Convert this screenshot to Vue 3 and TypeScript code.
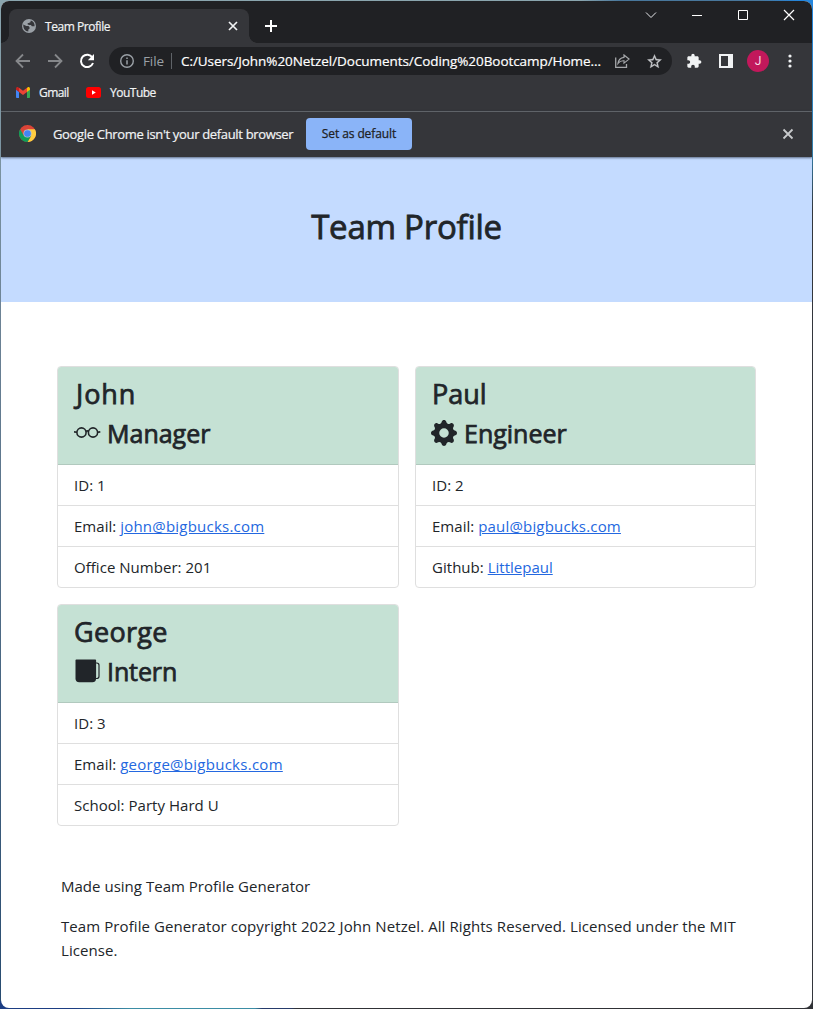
<script setup lang="ts">
interface Row { label: string; value: string; link?: boolean }
interface Member { name: string; role: string; icon: 'glasses' | 'gear' | 'mug'; rows: Row[] }

const team: Member[] = [
  { name: 'John', role: 'Manager', icon: 'glasses', rows: [
    { label: 'ID:', value: '1' },
    { label: 'Email:', value: 'john@bigbucks.com', link: true },
    { label: 'Office Number:', value: '201' },
  ] },
  { name: 'Paul', role: 'Engineer', icon: 'gear', rows: [
    { label: 'ID:', value: '2' },
    { label: 'Email:', value: 'paul@bigbucks.com', link: true },
    { label: 'Github:', value: 'Littlepaul', link: true },
  ] },
  { name: 'George', role: 'Intern', icon: 'mug', rows: [
    { label: 'ID:', value: '3' },
    { label: 'Email:', value: 'george@bigbucks.com', link: true },
    { label: 'School:', value: 'Party Hard U' },
  ] },
]
</script>

<template>
  <div class="desktop">
    <div class="window">
      <div class="titlebar">
        <div class="tab">
          <svg class="globe" width="14" height="14" viewBox="0 0 14 14">
            <circle cx="7" cy="7" r="7" fill="#9aa0a6" />
            <path d="M1.300 5.500 4.300 7h2.200l1 1.200v1.500L6.300 10.600v1.900C3.300 12.300 1 9.500 1.300 5.500ZM8.800 1.600 8.400 3.200 6.800 4H5.700v1.500l1.500.5h1.700l1 1.300h2.700C12.800 4.500 11.300 2.300 8.800 1.600Z" fill="#35363a" />
          </svg>
          <span class="tab-title">Team Profile</span>
          <svg width="10" height="10" viewBox="0 0 10 10"><path d="M1 1l8 8M9 1 1 9" stroke="#f1f3f4" stroke-width="1.7" /></svg>
        </div>
        <svg class="plus" width="12" height="12" viewBox="0 0 12 12"><path d="M6 0v12M0 6h12" stroke="#fff" stroke-width="2" /></svg>
        <div class="controls">
          <svg width="12" height="12" viewBox="0 0 12 12"><path d="M1 3.500 6 8.500l5-5" fill="none" stroke="#e8eaed" /></svg>
          <svg width="12" height="12" viewBox="0 0 12 12"><path d="M1 6.500h10" stroke="#fff" /></svg>
          <svg width="12" height="12" viewBox="0 0 12 12"><path d="M1.500 1.500h9v9h-9z" fill="none" stroke="#fff" /></svg>
          <svg width="12" height="12" viewBox="0 0 12 12"><path d="m1 1 10 10M11 1 1 11" stroke="#fff" stroke-width="1.200" /></svg>
        </div>
      </div>

      <div class="toolbar">
        <svg class="nav" width="16" height="16" viewBox="0 0 16 16"><path d="M15 8H2.200M8 1.500 1.500 8 8 14.500" fill="none" stroke="#85878a" stroke-width="1.800" /></svg>
        <svg class="nav" width="16" height="16" viewBox="0 0 16 16"><path d="M1 8h12.800M8 1.500 14.500 8 8 14.500" fill="none" stroke="#85878a" stroke-width="1.800" /></svg>
        <svg class="reload" width="16" height="16" viewBox="0 0 16 16">
          <path d="M13.400 4.500A6.200 6.200 0 1 0 14 10" fill="none" stroke="#fff" stroke-width="2" />
          <path d="M15 1v6.200H8.800z" fill="#fff" />
        </svg>
        <div class="omnibox">
          <svg width="14" height="14" viewBox="0 0 14 14"><circle cx="7" cy="7" r="6.300" fill="none" stroke="#9aa0a6" stroke-width="1.400" /><path d="M7 6.200v4.300M7 3.400v1.500" stroke="#9aa0a6" stroke-width="1.500" /></svg>
          <span class="scheme">File</span>
          <span class="divider"></span>
          <span class="url">C:/Users/John%20Netzel/Documents/Coding%20Bootcamp/Home...</span>
          <svg class="share" width="16" height="14" viewBox="0 0 16 14">
            <path d="M1.700 3.500v9.800h10.800V10" fill="none" stroke="#a5a7aa" stroke-width="1.300" />
            <path d="M10 1l5 4.100-5 4V6.800C7.200 6.600 5.500 7.300 4 9.300c.4-3.300 2.500-5.600 6-6z" fill="none" stroke="#a5a7aa" stroke-width="1.200" />
          </svg>
          <svg class="star" width="17" height="17" viewBox="0 0 24 24"><path fill="#c4c7ca" stroke="#c4c7ca" stroke-width=".4" d="M22 9.240l-7.190-.62L12 2 9.190 8.630 2 9.240l5.460 4.730L5.820 21 12 17.270 18.180 21l-1.630-7.030L22 9.240zM12 15.400l-3.760 2.270 1-4.280-3.320-2.880 4.380-.38L12 6.100l1.710 4.040 4.380.38-3.320 2.880 1 4.280L12 15.400z" /></svg>
        </div>
        <svg class="puzzle" width="16" height="16" viewBox="0 0 24 24"><path fill="#f1f3f4" d="M20.500 11H19V7c0-1.100-.9-2-2-2h-4V3.500C13 2.120 11.880 1 10.500 1S8 2.120 8 3.500V5H4c-1.100 0-1.990.9-1.990 2v3.800H3.500c1.490 0 2.700 1.210 2.700 2.700s-1.210 2.700-2.700 2.700H2V20c0 1.100.9 2 2 2h3.800v-1.500c0-1.490 1.210-2.700 2.700-2.700 1.490 0 2.700 1.210 2.700 2.700V22H17c1.100 0 2-.9 2-2v-4h1.500c1.380 0 2.500-1.120 2.500-2.500S21.880 11 20.500 11z" /></svg>
        <svg class="panel" width="14" height="14" viewBox="0 0 14 14"><path fill="#f1f3f4" fill-rule="evenodd" d="M0 0h14v14H0zM2 2v10h7V2z" /></svg>
        <span class="avatar">J</span>
        <svg class="dots" width="4" height="14" viewBox="0 0 4 14" fill="#f1f3f4"><circle cx="2" cy="2" r="1.600" /><circle cx="2" cy="7" r="1.600" /><circle cx="2" cy="12" r="1.600" /></svg>
      </div>

      <div class="bookmarks">
        <svg class="gmail" width="14" height="11" viewBox="0 0 14 11">
          <path d="M0 2v8.200c0 .4.400.8.800.8H3V4.500z" fill="#4285f4" /><path d="M14 2v8.200c0 .4-.4.800-.8.800H11V4.500z" fill="#34a853" />
          <path d="M11 1v4l3-2.200V1.500C14 .2 12.600-.5 11.500.4z" fill="#fbbc04" /><path d="M3 1v4L0 2.800V1.500C0 .2 1.400-.5 2.500.4z" fill="#c5221f" />
          <path d="M3 .8 7 3.800l4-3V5L7 8 3 5z" fill="#ea4335" />
        </svg>
        <span class="bm-gmail">Gmail</span>
        <svg class="yt" width="15" height="11" viewBox="0 0 15 11"><rect width="15" height="11" rx="2.500" fill="#f00" /><path d="M6 3.300v4.400l3.800-2.200z" fill="#fff" /></svg>
        <span class="bm-yt">YouTube</span>
      </div>

      <div class="infobar">
        <svg class="chrome" width="17" height="17" viewBox="0 0 48 48">
          <circle cx="24" cy="24" r="24" fill="#db4437" />
          <path d="M24 12h20.800A24 24 0 0 1 24 48l10.400-18z" fill="#ffcd40" />
          <path d="M34.400 30 24 48A24 24 0 0 1 3.200 12l10.400 18z" fill="#0f9d58" />
          <circle cx="24" cy="24" r="11.500" fill="#b9c3cf" /><circle cx="24" cy="24" r="9.500" fill="#4285f4" />
        </svg>
        <span class="info-text">Google Chrome isn't your default browser</span>
        <button class="default-btn">Set as default</button>
        <svg class="dismiss" width="12" height="12" viewBox="0 0 12 12"><path d="m1.500 1.500 9 9m0-9-9 9" stroke="#c8cacc" stroke-width="1.800" /></svg>
      </div>

      <header class="hero"><h1>Team Profile</h1></header>

      <main class="cards">
        <article v-for="m in team" :key="m.name" class="card" :class="m.name.toLowerCase()">
          <div class="card-head">
            <h2>{{ m.name }}</h2>
            <div class="role">
              <svg v-if="m.icon === 'glasses'" width="27" height="26" viewBox="0 0 27 26" fill="none" stroke="#212529" stroke-width="1.600">
                <circle cx="7.500" cy="12.500" r="4.600" /><circle cx="19" cy="12.500" r="4.600" /><path d="M12 11.500q1.300-1.100 2.500 0M0 11.900l3 .3M23.500 12.200l2.800-.3" />
              </svg>
              <svg v-else-if="m.icon === 'gear'" width="26" height="26" viewBox="0 0 16 16" fill="#212529">
                <path d="M9.405 1.050c-.413-1.400-2.397-1.400-2.810 0l-.1.340a1.464 1.464 0 0 1-2.105.872l-.310-.170c-1.283-.698-2.686.705-1.987 1.987l.169.311c.446.820.023 1.841-.872 2.105l-.340.100c-1.400.413-1.400 2.397 0 2.810l.340.100a1.464 1.464 0 0 1 .872 2.105l-.170.310c-.698 1.283.705 2.686 1.987 1.987l.311-.169a1.464 1.464 0 0 1 2.105.872l.100.340c.413 1.400 2.397 1.400 2.810 0l.100-.340a1.464 1.464 0 0 1 2.105-.872l.310.170c1.283.698 2.686-.705 1.987-1.987l-.169-.311a1.464 1.464 0 0 1 .872-2.105l.340-.100c1.400-.413 1.400-2.397 0-2.810l-.340-.100a1.464 1.464 0 0 1-.872-2.105l.170-.310c.698-1.283-.705-2.686-1.987-1.987l-.311.169a1.464 1.464 0 0 1-2.105-.872zM8 10.930a2.929 2.929 0 1 1 0-5.860 2.929 2.929 0 0 1 0 5.858z" />
              </svg>
              <svg v-else width="27" height="26" viewBox="0 0 27 26">
                <path d="M2.300 1.500H21.300q.8 0 .8 1V20.500q0 3.700-3.700 3.700H5.200q-3.700 0-3.700-3.700V2.500q0-1 .8-1Z" fill="#212529" />
                <path d="M22 5h.8q2.200 0 2.200 2.200v11.100q0 2.200-2.200 2.200H22" fill="none" stroke="#212529" stroke-width="1.200" />
              </svg>
              <h3>{{ m.role }}</h3>
            </div>
          </div>
          <ul>
            <li v-for="r in m.rows" :key="r.label">{{ r.label }} <a v-if="r.link">{{ r.value }}</a><template v-else>{{ r.value }}</template></li>
          </ul>
        </article>
      </main>

      <footer>
        <p class="made">Made using Team Profile Generator</p>
        <p class="legal">Team Profile Generator copyright 2022 John Netzel. All Rights Reserved. Licensed under the MIT<br />License.</p>
      </footer>
    </div>
  </div>
</template>

<style>
body { margin: 0; }
</style>

<style scoped>
* { box-sizing: border-box; }
svg { flex: none; display: block; }
h1, h2, h3, p, ul { margin: 0; padding: 0; }
.desktop {
  width: 813px; height: 1009px; padding: 1px; overflow: hidden;
  background:
    linear-gradient(90deg, #1d3e83 0 75px, #3b8da5 130px 255px, #263b6b 262px 290px, #303236 296px) 0 100% / 100% 8px no-repeat,
    linear-gradient(90deg, #8aa5ae 0 580px, #48779c 620px 760px, #2386de 800px) 0 0 / 100% 8px no-repeat,
    linear-gradient(#2386de, #347fab 150px, #33363c 210px) 100% 0 / 8px 100% no-repeat,
    linear-gradient(#8aa5ae, #6e8496 300px, #274b70) 0 0 / 8px 100% no-repeat;
}
.window {
  width: 811px; height: 1007px; border-radius: 8px; overflow: hidden; background: #fff;
  font-family: "Open Sans", "Noto Sans", sans-serif; white-space: nowrap;
}
.titlebar { height: 42px; background: #202124; display: flex; padding-left: 8px; }
.tab {
  position: relative; width: 240px; height: 34px; margin-top: 8px; padding: 0 11px 0 13px;
  background: #35363a; border-radius: 8px 8px 0 0; display: flex; align-items: center; color: #f1f3f4; font-size: 12px;
}
.tab::before, .tab::after { content: ""; position: absolute; bottom: 0; width: 8px; height: 8px; }
.tab::before { left: -8px; background: radial-gradient(circle at 0 0, transparent 7.500px, #35363a 8px); }
.tab::after { right: -8px; background: radial-gradient(circle at 100% 0, transparent 7.500px, #35363a 8px); }
.tab-title { margin-left: 9px; flex: 1; letter-spacing: -0.45px; -webkit-text-stroke: 0.2px; }
.plus { margin: 19px 0 0 16px; }
.controls { display: flex; gap: 34px; margin: 8px 17px 0 auto; }
.toolbar { height: 36px; background: #35363a; display: flex; align-items: center; padding-left: 14px; }
.nav { margin-right: 16px; }
.reload { margin-right: 14px; }
.omnibox {
  width: 563px; height: 28px; border-radius: 14px; background: #202124; display: flex; align-items: center;
  padding: 0 9px 0 11px; font-size: 13.500px;
}
.scheme { width: 28px; margin-left: 9px; color: #9aa0a6; letter-spacing: -0.1px; }
.divider { width: 1px; height: 16px; background: #5f6368; }
.url { margin-left: 9px; color: #fff; letter-spacing: -0.06px; -webkit-text-stroke: 0.2px; }
.share { margin-left: auto; margin-right: 16px; }
.puzzle { margin-left: 14px; }
.panel { margin-left: 17px; }
.avatar {
  width: 22px; height: 22px; margin-left: 14px; border-radius: 50%; background: #c2185b; color: #f7dfe8;
  font: 12px/22px Roboto, sans-serif; text-align: center;
}
.dots { margin-left: 19px; }
.bookmarks { height: 32px; background: #35363a; display: flex; align-items: center; padding: 0 0 5px 15px; color: #f1f3f4; font-size: 12px; -webkit-text-stroke: 0.2px; }
.bm-gmail { width: 32px; margin-left: 9px; letter-spacing: -0.55px; }
.yt { margin-left: 15px; }
.bm-yt { margin-left: 9px; letter-spacing: -0.5px; }
.infobar {
  position: relative; height: 46px; background: #35363a; border-top: 1px solid #5f6368;
  display: flex; align-items: center; padding: 0 18px 2px; color: #f1f3f4; box-shadow: 0 1px 2px rgb(40 50 70 / 65%);
}
.info-text { width: 253px; padding-left: 17px; font-size: 13px; letter-spacing: -0.33px; -webkit-text-stroke: 0.2px; }
.default-btn {
  width: 106px; height: 32px; margin-left: 17px; padding: 0; border: 0; border-radius: 4px; background: #8ab4f8;
  color: #202124; font: 12px "Open Sans", "Noto Sans", sans-serif; letter-spacing: -0.1px; -webkit-text-stroke: 0.25px;
}
.dismiss { margin-left: auto; }
.hero { height: 145px; background: #c4dbff; display: flex; justify-content: center; padding-top: 48px; color: #212529; }
.hero h1 { font-size: 33px; line-height: 44px; font-weight: 400; letter-spacing: -0.25px; -webkit-text-stroke: 0.8px; }
.cards { display: grid; grid-template-columns: 342px 341px; gap: 16px; padding: 64px 56px 0; color: #212529; }
.card { height: 222px; border: 1px solid #dfdfdf; border-radius: 4px; overflow: hidden; background: #fff; }
.card-head { height: 98px; padding: 8px 16px; background: #c5e1d4; border-bottom: 1px solid #b1c9be; }
h2 { font-size: 27px; line-height: 38px; font-weight: 400; letter-spacing: 0.3px; -webkit-text-stroke: 0.75px; }
.john h2 { padding-left: 2px; letter-spacing: 0.9px; }
.paul h2 { letter-spacing: 0; }
.role { display: flex; align-items: center; height: 40px; }
.role svg { margin-bottom: 1px; }
h3 { margin-left: 6px; font-size: 25px; line-height: 40px; font-weight: 400; -webkit-text-stroke: 0.75px; }
.paul .role { margin-left: -1px; }
.paul h3 { margin-left: 7px; }
.george h3 { letter-spacing: -0.1px; }
ul { list-style: none; }
li { height: 41px; padding-left: 16px; border-bottom: 1px solid #dfdfdf; font-size: 15px; line-height: 40px; letter-spacing: 0.03px; }
li:last-child { border-bottom: 0; }
a { color: #2468e0; text-decoration: underline; letter-spacing: 0.18px; }
.john a { letter-spacing: 0.22px; }
.george a { letter-spacing: 0.27px; }
.paul li:last-child a { letter-spacing: 0; }
footer { padding: 48px 60px 0; color: #212529; font-size: 15px; line-height: 24px; }
.made { letter-spacing: 0.02px; }
.legal { margin-top: 16px; letter-spacing: 0.085px; }
</style>
